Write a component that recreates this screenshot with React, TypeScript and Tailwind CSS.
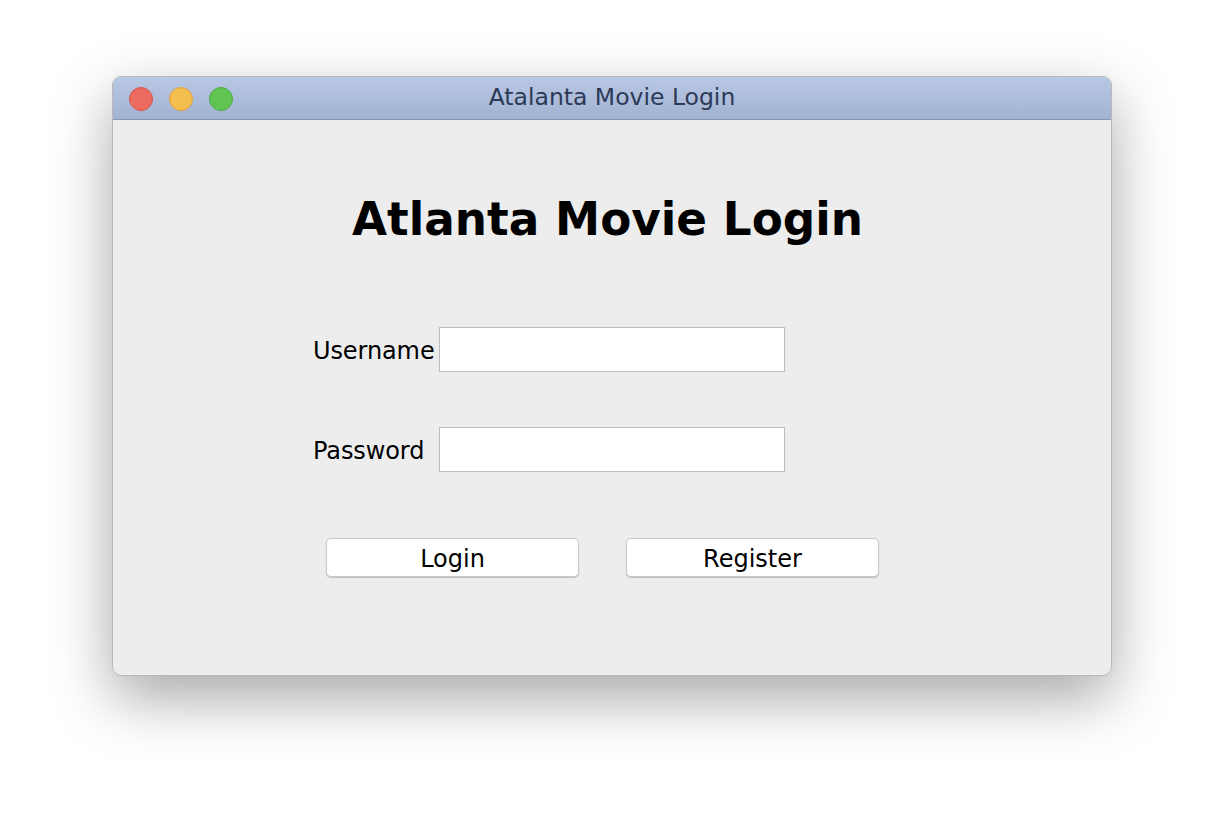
import React from 'react';

const ui = { fontFamily: '"DejaVu Sans", "Liberation Sans", sans-serif' };

export default function App() {
  return (
    <div className="w-[1224px] h-[824px] bg-white pt-[76px] pl-[112px]" style={ui}>
      <div className="w-[1000px] h-[600px] rounded-[9px] overflow-hidden bg-[#ededed] border border-[#b9b9b9] shadow-[0_22px_60px_rgba(0,0,0,0.35)] flex flex-col">
        {/* Title bar */}
        <div className="relative h-[43px] shrink-0 bg-gradient-to-b from-[#b9c8e4] to-[#a1b2d2] border-b border-[#8394b4] flex items-center justify-center">
          <div className="absolute left-[16px] top-[10px] flex gap-[16px]">
            <span className="w-[24px] h-[24px] rounded-full bg-[#ed6a5e] border border-[#d3564b]" />
            <span className="w-[24px] h-[24px] rounded-full bg-[#f5bf4f] border border-[#d9a23c]" />
            <span className="w-[24px] h-[24px] rounded-full bg-[#61c554] border border-[#4ca93f]" />
          </div>
          <span className="text-[23.5px] text-[#2c3a55]">Atalanta Movie Login</span>
        </div>

        {/* Content */}
        <div className="flex flex-col items-center">
          <h1 className="mt-[70px] text-[45.3px] font-bold leading-[60px] text-black ml-[-9px]">
            Atlanta Movie Login
          </h1>

          <div className="mt-[77px] flex flex-col gap-[55px] self-start ml-[200px]">
            <div className="flex items-center">
              <label className="w-[126px] pt-[3px] text-[24px] tracking-[-0.1px] text-black">Username</label>
              <div className="w-[346px] h-[45px] bg-white border border-[#bdbdbd]" />
            </div>
            <div className="flex items-center">
              <label className="w-[126px] pt-[3px] text-[24px] tracking-[-0.1px] text-black">Password</label>
              <div className="w-[346px] h-[45px] bg-white border border-[#bdbdbd]" />
            </div>
          </div>

          <div className="mt-[66px] flex gap-[47px] self-start ml-[213px]">
            <button className="w-[253px] h-[39px] pt-[3px] bg-white rounded-[5px] border border-[#c9c9c9] shadow-[0_1px_1px_rgba(0,0,0,0.2)] text-[24px] leading-none text-black">
              Login
            </button>
            <button className="w-[253px] h-[39px] pt-[3px] bg-white rounded-[5px] border border-[#c9c9c9] shadow-[0_1px_1px_rgba(0,0,0,0.2)] text-[24px] leading-none text-black">
              Register
            </button>
          </div>
        </div>
      </div>
    </div>
  );
}
